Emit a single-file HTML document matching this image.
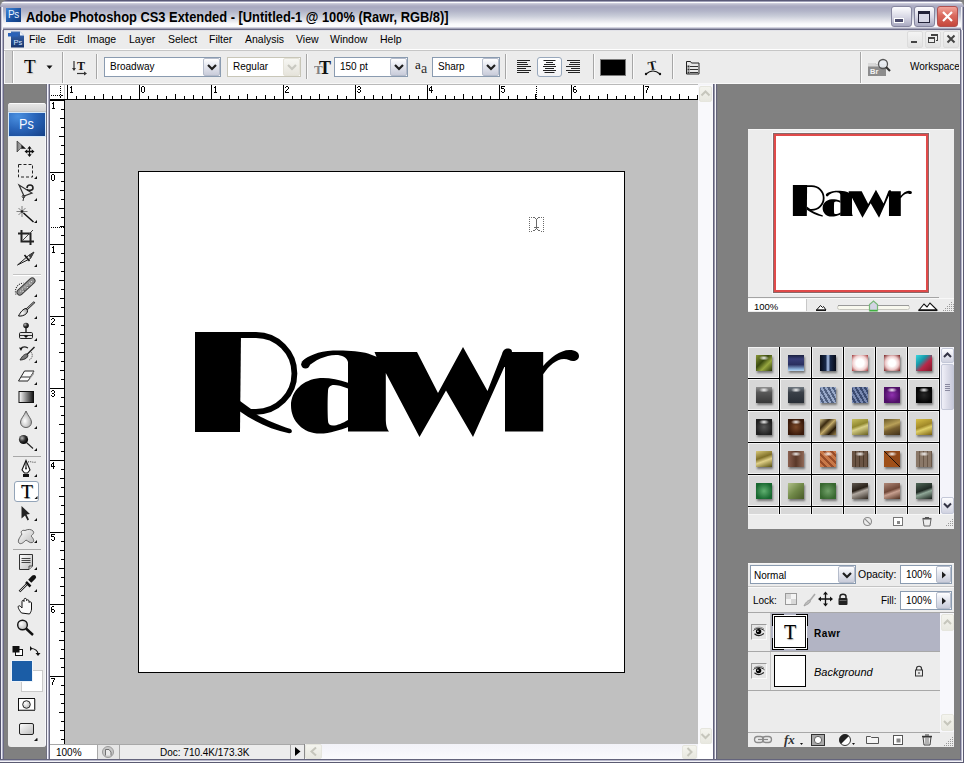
<!DOCTYPE html>
<html><head><meta charset="utf-8"><title>Photoshop CS3</title>
<style>
*{margin:0;padding:0;box-sizing:border-box}
html,body{width:964px;height:763px;overflow:hidden;background:#808080;font-family:"Liberation Sans",sans-serif;font-size:11px;color:#000}
.a{position:absolute}
.t{position:absolute;white-space:nowrap;line-height:1}
#title{left:0;top:0;width:964px;height:30px;border-radius:8px 8px 0 0;
background:linear-gradient(to bottom,#5a5a78 0px,#5a5a78 1px,#a0a0b8 1px,#a0a0b8 2px,#fcfcfe 2px,#fcfcfe 3px,#d4d4e0 3px,#b4b4c8 5px,#a8a8c0 7px,#b2b4c8 11px,#c8ccd8 16px,#e8e8ee 21px,#fafafc 24px,#fcfcfe 27px,#d4d4e0 27px,#d4d4e0 28px,#a4a4b8 28px,#a4a4b8 29px,#6c6c86 29px,#6c6c86 30px)}
.tbtn{top:6px;width:21px;height:21px;border-radius:3px;border:1px solid #8787a0;background:linear-gradient(to bottom,#fdfdff,#d6d6e4 55%,#a9a9c0)}
.tbtn.c{border-color:#b05050;background:linear-gradient(to bottom,#f2a49a,#da6a5e 45%,#c5473c)}
#menubar{left:4px;top:30px;width:956px;height:20px;background:#ececec;border-top:1px solid #e2e2e8;border-bottom:1px solid #ffffff}
#optbar{left:4px;top:50px;width:956px;height:34px;background:#ececec;border-top:1px solid #c6c6c6;border-bottom:1px solid #f8f8f8}
.mi{top:34px;font-size:10.5px}
.mdib{top:31px;width:16px;height:17px;background:linear-gradient(#f4f4f4,#e2e2e2);border:1px solid #dcdcdc;border-radius:2px}
.sep{position:absolute;top:52px;width:2px;height:31px;border-left:1px solid #a6a6a6;border-right:1px solid #fafafa}
.combo{position:absolute;top:57px;height:20px;background:#fff;border:1px solid #8a9bb0}
.cbtn{position:absolute;top:0px;right:0px;width:17px;height:18px;border:1px solid #b5bccb;border-radius:2px;background:linear-gradient(#ffffff 0%,#eceef4 30%,#c9ccda 100%)}
.chev{position:absolute;left:3px;top:5px}
.ctxt{position:absolute;left:5px;top:4px;font-size:10px;white-space:nowrap;line-height:1}
.combo.dis{border-color:#c8c6b8}
.combo.dis .cbtn{border-color:#e4e2d8;background:linear-gradient(#f6f6f2,#e6e4dc)}
.sbtn{position:absolute;border:1px solid #e6e6de;border-radius:2px;background:linear-gradient(#f4f4ee,#e8e8e0)}

</style></head><body>
<div class="a" style="left:0;top:0;width:964px;height:763px;background:#808080"></div>
<!-- frame left -->
<div class="a" style="left:0;top:6px;width:4px;height:757px;background:linear-gradient(to right,#52526c 0,#52526c 1px,#eeeef6 1px,#eeeef6 2px,#b0b0c8 2px,#b0b0c8 3px,#6a6a82 3px)"></div>
<div class="a" style="left:960px;top:6px;width:4px;height:757px;background:linear-gradient(to right,#6a6a82 0,#6a6a82 1px,#b4b4c8 1px,#b4b4c8 2px,#f4f4f8 2px,#f4f4f8 3px,#5a5a72 3px)"></div>
<div class="a" style="left:0;top:759px;width:964px;height:4px;background:linear-gradient(to bottom,#64647c 0,#64647c 1px,#b8b8cc 1px,#b8b8cc 2px,#f4f4f8 2px,#f4f4f8 3px,#5a5a72 3px)"></div>
<div class="a" style="left:962px;top:759px;width:1px;height:3px;background:#f4f4f8"></div><div class="a" style="left:963px;top:759px;width:1px;height:4px;background:#5a5a72"></div><div class="a" style="left:961px;top:759px;width:1px;height:1px;background:#b4b4c8"></div>
<div id="title" class="a"></div>
<div class="a" style="left:0;top:7px;width:3px;height:23px;background:linear-gradient(to right,#5a5a76 0,#5a5a76 1px,#c8c8d6 1px,#c8c8d6 2px,#f4f4f8 2px)"></div>
<div class="a" style="left:961px;top:7px;width:3px;height:23px;background:linear-gradient(to right,#f0f0f4 0,#f0f0f4 1px,#a8a8bc 1px,#a8a8bc 2px,#5a5a76 2px)"></div>
<!-- ps icon -->
<div class="a" style="left:6px;top:8px;width:15px;height:14px;background:linear-gradient(135deg,#3d86d8,#1a4f9e 60%,#123d80);box-shadow:0 0 0 0 #000"></div>
<div class="t" style="left:8px;top:10px;font-size:10px;color:#e8f2ff;letter-spacing:-0.5px">Ps</div>
<div class="t" id="ttxt" style="left:26px;top:10px;font-size:14px;font-weight:bold;color:#000;transform:scaleX(0.92);transform-origin:0 0">Adobe Photoshop CS3 Extended - [Untitled-1 @ 100% (Rawr, RGB/8)]</div>
<div class="a tbtn" style="left:891px"></div>
<div class="a" style="left:895px;top:19px;width:8px;height:3px;background:#4a4a6a;border:1px solid #fff;box-sizing:content-box;margin:-1px"></div>
<div class="a tbtn" style="left:914px"></div>
<div class="a" style="left:918px;top:11px;width:12px;height:12px;border:1px solid #222238;border-top:3px solid #222238;background:#d8d8e6"></div>
<div class="a tbtn c" style="left:937px"></div>
<svg class="a" style="left:937px;top:6px" width="21" height="21"><path d="M6 6 L15 15 M15 6 L6 15" stroke="#fff" stroke-width="2.2"/></svg>
<!-- menubar -->
<div id="menubar" class="a"></div>
<svg class="a" style="left:7px;top:31px" width="18" height="17">
<defs><linearGradient id="mig" x1="0" y1="0" x2="0" y2="1"><stop offset="0" stop-color="#3a6cb8"/><stop offset="1" stop-color="#16346c"/></linearGradient></defs>
<path d="M4 0.5 H13 L17 4.5 V16.5 H4 Z" fill="url(#mig)"/><path d="M13 0.5 L17 4.5 H13 Z" fill="#eef2f8"/><rect x="1" y="2" width="10" height="3.5" fill="#2a62b8"/>
<text x="6.5" y="14" font-size="7.5" fill="#d8e8ff" font-family="Liberation Sans">Ps</text></svg>
<div class="t mi" style="left:29px">File</div>
<div class="t mi" style="left:57px">Edit</div>
<div class="t mi" style="left:87px">Image</div>
<div class="t mi" style="left:129px">Layer</div>
<div class="t mi" style="left:168px">Select</div>
<div class="t mi" style="left:209px">Filter</div>
<div class="t mi" style="left:245px">Analysis</div>
<div class="t mi" style="left:296px">View</div>
<div class="t mi" style="left:330px">Window</div>
<div class="t mi" style="left:380px">Help</div>
<div class="a mdib" style="left:907px"></div>
<div class="a" style="left:911px;top:41px;width:6px;height:2px;background:#444"></div>
<div class="a mdib" style="left:925px"></div>
<svg class="a" style="left:925px;top:31px" width="16" height="17" shape-rendering="crispEdges"><path d="M6 3h6v6h-1.5" fill="none" stroke="#444" stroke-width="1"/><rect x="6" y="3" width="6" height="1.5" fill="#444"/><rect x="3.5" y="6.5" width="6" height="5" fill="#ececec" stroke="#444" stroke-width="1"/><rect x="3" y="6" width="7" height="2" fill="#444"/></svg>
<div class="a mdib" style="left:943px"></div>
<svg class="a" style="left:943px;top:31px" width="16" height="17"><path d="M4.5 4.5 L11.5 11.5 M11.5 4.5 L4.5 11.5" stroke="#444" stroke-width="2"/></svg>
<!-- options bar -->
<div id="optbar" class="a"></div>
<!-- gripper -->
<div class="a" style="left:4px;top:51px;width:10px;height:32px;background:linear-gradient(to right,#f6f6f6 0,#f6f6f6 1px,#d2d2d2 1px,#d2d2d2 8px,#a8a8a8 8px,#a8a8a8 9px,#fff 9px)"></div>
<div class="t" style="left:24px;top:57px;font-family:'Liberation Serif',serif;font-size:19px;text-shadow:1px 1px 1px #bbb">T</div>
<svg class="a" style="left:46px;top:65px" width="8" height="5"><path d="M0.5 0.5h6l-3 3.5z" fill="#111"/></svg>
<div class="sep" style="left:62px"></div>
<svg class="a" style="left:71px;top:59px" width="18" height="17">
<path d="M3 2 V11" stroke="#333" stroke-width="1.2"/><path d="M1 9 L3 12 L5 9" fill="#333"/>
<text x="6" y="11" font-size="12" font-weight="bold" font-family="Liberation Serif" fill="#111">T</text>
<path d="M6 14.5 H15" stroke="#333" stroke-width="1.2"/><path d="M13 12.5 L16 14.5 L13 16.5z" fill="#333"/></svg>
<div class="sep" style="left:96px;top:54px;height:25px"></div>
<div class="combo" style="left:104px;width:117px"><div class="ctxt">Broadway</div><div class="cbtn"><svg class="chev" width="10" height="7"><path d="M1 1 L5 5 L9 1" fill="none" stroke="#1e1e1e" stroke-width="2.2"/></svg></div></div>
<div class="combo dis" style="left:227px;width:74px"><div class="ctxt">Regular</div><div class="cbtn"><svg class="chev" width="10" height="7"><path d="M1 1 L5 5 L9 1" fill="none" stroke="#c8c8c0" stroke-width="2.2"/></svg></div></div>
<div class="sep" style="left:306px;top:54px;height:25px"></div>
<svg class="a" style="left:314px;top:59px" width="19" height="17">
<text x="0" y="15" font-size="13" font-weight="bold" font-family="Liberation Serif" fill="#808080">T</text>
<text x="5" y="15" font-size="18" font-weight="bold" font-family="Liberation Serif" fill="#111">T</text></svg>
<div class="combo" style="left:334px;width:74px"><div class="ctxt">150 pt</div><div class="cbtn"><svg class="chev" width="10" height="7"><path d="M1 1 L5 5 L9 1" fill="none" stroke="#1e1e1e" stroke-width="2.2"/></svg></div></div>
<svg class="a" style="left:414px;top:58px" width="17" height="17">
<text x="1" y="11" font-size="13" font-family="Liberation Serif" fill="#111">a</text>
<text x="7" y="15" font-size="14" font-family="Liberation Serif" fill="#333">a</text></svg>
<div class="combo" style="left:432px;width:68px"><div class="ctxt">Sharp</div><div class="cbtn"><svg class="chev" width="10" height="7"><path d="M1 1 L5 5 L9 1" fill="none" stroke="#1e1e1e" stroke-width="2.2"/></svg></div></div>
<div class="sep" style="left:505px;top:54px;height:25px"></div>
<svg class="a" style="left:517px;top:59px" width="16" height="16"><g stroke="#222" stroke-width="1"><path d="M0 1.5h13M0 3.5h10M0 5.5h11M0 7.5h14M0 9.5h9M0 11.5h14M0 13.5h12"/></g></svg>
<div class="a" style="left:537px;top:57px;width:25px;height:20px;border:1px solid #98a8bc;border-radius:3px;background:linear-gradient(#fff,#f2f2f4)"></div>
<svg class="a" style="left:542px;top:59px" width="16" height="16"><g stroke="#222" stroke-width="1"><path d="M1.5 1.5h12M4 3.5h7M2 5.5h11M1 7.5h13M3 9.5h9M1 11.5h13M2.5 13.5h10"/></g></svg>
<svg class="a" style="left:566px;top:59px" width="16" height="16"><g stroke="#222" stroke-width="1"><path d="M1 1.5h13M4 3.5h10M3 5.5h11M0 7.5h14M5 9.5h9M0 11.5h14M2 13.5h12"/></g></svg>
<div class="sep" style="left:593px;top:54px;height:25px"></div>
<div class="a" style="left:600px;top:59px;width:26px;height:17px;background:#000;border:1px solid #7a7a7a"></div>
<div class="sep" style="left:632px;top:54px;height:25px"></div>
<svg class="a" style="left:644px;top:58px" width="18" height="18">
<text x="4" y="12" font-size="13" font-weight="bold" font-family="Liberation Serif" fill="#111" transform="rotate(-12 8 8)">T</text>
<path d="M2 16 Q9 10 16 16" fill="none" stroke="#111" stroke-width="1.2"/><circle cx="2" cy="16" r="1.2" fill="#111"/><circle cx="16" cy="16" r="1.2" fill="#111"/></svg>
<div class="sep" style="left:672px;top:54px;height:25px"></div>
<svg class="a" style="left:685px;top:59px" width="17" height="17">
<path d="M1.5 2.5h4l1 1.5h7.5v11h-12.5z" fill="#e8e8e8" stroke="#222"/><g stroke="#333"><path d="M5 7.5h8M5 10.5h8M5 13.5h8"/></g><g fill="#333"><rect x="2.5" y="6.5" width="2" height="2"/><rect x="2.5" y="9.5" width="2" height="2"/><rect x="2.5" y="12.5" width="2" height="2"/></g></svg>
<div class="sep" style="left:860px"></div>
<svg class="a" style="left:867px;top:58px" width="26" height="19">
<path d="M1 5h7l1 1.5h10v11.5h-18z" fill="#8c8c8c"/><path d="M1 5h7l1 1.5h10v2h-18z" fill="#d8d8d8"/>
<text x="3" y="16" font-size="7.5" font-weight="bold" font-family="Liberation Sans" fill="#f4f4f4">Br</text>
<circle cx="16" cy="6" r="4.5" fill="#e8eef4" fill-opacity="0.8" stroke="#555" stroke-width="1.3"/><path d="M19 9 L23 13" stroke="#333" stroke-width="2.2"/></svg>
<div class="a" style="left:900px;top:55px;width:59px;height:20px;overflow:hidden"><div class="t" style="left:10px;top:7px;font-size:10px">Workspace</div></div>
<!-- doc window frame -->
<div class="a" style="left:46px;top:84px;width:4px;height:675px;background:linear-gradient(to right,#707080 0,#707080 1px,#f4f4fc 1px,#f4f4fc 2px,#b0b0c8 2px,#b0b0c8 3px,#6a6a80 3px)"></div>
<div class="a" style="left:713px;top:84px;width:5px;height:675px;background:linear-gradient(to right,#60607a 0,#60607a 1px,#9a9aac 1px,#9a9aac 2px,#f4f4f8 2px,#f4f4f8 3px,#64647a 3px,#64647a 4px,#7c7c80 4px)"></div>
<div class="a" style="left:50px;top:84px;width:648px;height:1px;background:#b9b9b9"></div><div class="a" style="left:698px;top:84px;width:15px;height:1px;background:#f4f4f8"></div>
<div class="a" style="left:65px;top:100px;width:633px;height:644px;background:#c0c0c0"></div>
<div class="a" style="left:138px;top:171px;width:487px;height:502px;background:#fff;border:1px solid #000"></div>
<!-- vscroll -->
<div class="a" style="left:698px;top:85px;width:15px;height:659px;background:#f9f9fc"></div>
<div class="sbtn" style="left:699px;top:86px;width:13px;height:16px"></div>
<svg class="a" style="left:699px;top:86px" width="13" height="16"><path d="M2.5 9.5 L6.5 5.5 L10.5 9.5" fill="none" stroke="#c6c6bc" stroke-width="2"/></svg>
<div class="sbtn" style="left:700px;top:728px;width:12px;height:16px"></div>
<svg class="a" style="left:699px;top:728px" width="13" height="16"><path d="M2.5 6 L6.5 10 L10.5 6" fill="none" stroke="#c6c6bc" stroke-width="2"/></svg>
<!-- status bar -->
<div class="a" style="left:50px;top:744px;width:255px;height:1px;background:#a8a8a8"></div>
<div class="a" style="left:50px;top:745px;width:47px;height:14px;background:#fff"></div>
<div class="t" style="left:56px;top:748px;font-size:10px">100%</div>
<div class="a" style="left:97px;top:745px;width:1px;height:14px;background:#a8a8a8"></div>
<div class="a" style="left:98px;top:745px;width:21px;height:14px;background:#e6e6e6"></div>
<svg class="a" style="left:101px;top:745px" width="14" height="14"><circle cx="7" cy="7" r="5.5" fill="#c8c8c8" stroke="#9a9a9a"/><path d="M4.5 10.5 V4.5 H8 L10 7 V10.5" fill="#e8e8e8" stroke="#707070" stroke-width="1"/></svg>
<div class="a" style="left:119px;top:745px;width:1px;height:14px;background:#a8a8a8"></div>
<div class="a" style="left:120px;top:745px;width:170px;height:14px;background:#ececec"></div>
<div class="t" style="left:160px;top:748px;font-size:10px">Doc: 710.4K/173.3K</div>
<div class="a" style="left:290px;top:745px;width:1px;height:14px;background:#a8a8a8"></div>
<div class="a" style="left:291px;top:745px;width:13px;height:14px;background:#ececec"></div>
<svg class="a" style="left:291px;top:745px" width="13" height="14"><path d="M4 2 L9.5 6.5 L4 11z" fill="#000"/></svg>
<div class="a" style="left:304px;top:744px;width:1px;height:15px;background:#8a8a8a"></div>
<div class="a" style="left:305px;top:744px;width:393px;height:15px;background:linear-gradient(#f2f2f8,#fbfbfd)"></div>
<div class="sbtn" style="left:305px;top:744px;width:17px;height:15px"></div>
<svg class="a" style="left:305px;top:744px" width="17" height="15"><path d="M11 3.5 L6.5 7.5 L11 11.5" fill="none" stroke="#c6c6bc" stroke-width="2"/></svg>
<div class="sbtn" style="left:682px;top:745px;width:15px;height:14px"></div>
<svg class="a" style="left:682px;top:745px" width="15" height="14"><path d="M5.5 3 L9.5 7 L5.5 11" fill="none" stroke="#c6c6bc" stroke-width="2"/></svg>
<div class="a" style="left:698px;top:744px;width:15px;height:15px;background:#fff"></div>
<!-- cursor -->
<svg class="a" style="left:0;top:0" width="964" height="763" shape-rendering="crispEdges"><g fill="#6a6a6a"><rect x="529" y="217" width="1" height="1"/><rect x="543" y="217" width="1" height="1"/><rect x="529" y="219" width="1" height="1"/><rect x="543" y="219" width="1" height="1"/><rect x="529" y="221" width="1" height="1"/><rect x="543" y="221" width="1" height="1"/><rect x="529" y="223" width="1" height="1"/><rect x="543" y="223" width="1" height="1"/><rect x="529" y="225" width="1" height="1"/><rect x="543" y="225" width="1" height="1"/><rect x="529" y="227" width="1" height="1"/><rect x="543" y="227" width="1" height="1"/><rect x="529" y="229" width="1" height="1"/><rect x="543" y="229" width="1" height="1"/><rect x="529" y="231" width="1" height="1"/><rect x="543" y="231" width="1" height="1"/><rect x="531" y="217" width="1" height="1"/><rect x="531" y="231" width="1" height="1"/><rect x="541" y="217" width="1" height="1"/><rect x="541" y="231" width="1" height="1"/><rect x="536" y="219" width="1" height="10"/><rect x="534" y="227" width="5" height="1"/><rect x="533" y="217" width="2" height="1"/><rect x="535" y="218" width="1" height="1"/><rect x="538" y="217" width="2" height="1"/><rect x="537" y="218" width="1" height="1"/><rect x="535" y="229" width="1" height="1"/><rect x="537" y="229" width="1" height="1"/><rect x="533" y="230" width="2" height="1"/><rect x="538" y="230" width="2" height="1"/></g></svg>
<!-- rulers -->
<svg class="a" style="left:50px;top:84px" width="648" height="16" shape-rendering="crispEdges"><rect x="0" y="0" width="648" height="1" fill="#b9b9b9"/><rect x="0" y="1" width="648" height="14" fill="#fff"/><rect x="0" y="15" width="648" height="1" fill="#000"/><rect x="14" y="1" width="1" height="14" fill="#c8c8c8"/><g fill="#000"><rect x="17" y="1" width="1" height="14"/><rect x="26" y="12" width="1" height="3"/><rect x="35" y="11" width="1" height="4"/><rect x="44" y="12" width="1" height="3"/><rect x="53" y="10" width="1" height="5"/><rect x="62" y="12" width="1" height="3"/><rect x="71" y="11" width="1" height="4"/><rect x="80" y="12" width="1" height="3"/><rect x="21" y="2" width="1" height="1"/><rect x="20" y="3" width="2" height="1"/><rect x="21" y="4" width="1" height="1"/><rect x="21" y="5" width="1" height="1"/><rect x="21" y="6" width="1" height="1"/><rect x="21" y="7" width="1" height="1"/><rect x="20" y="8" width="3" height="1"/><rect x="89" y="1" width="1" height="14"/><rect x="98" y="12" width="1" height="3"/><rect x="107" y="11" width="1" height="4"/><rect x="116" y="12" width="1" height="3"/><rect x="125" y="10" width="1" height="5"/><rect x="134" y="12" width="1" height="3"/><rect x="143" y="11" width="1" height="4"/><rect x="152" y="12" width="1" height="3"/><rect x="92" y="2" width="2" height="1"/><rect x="91" y="3" width="1" height="1"/><rect x="94" y="3" width="1" height="1"/><rect x="91" y="4" width="1" height="1"/><rect x="94" y="4" width="1" height="1"/><rect x="91" y="5" width="1" height="1"/><rect x="94" y="5" width="1" height="1"/><rect x="91" y="6" width="1" height="1"/><rect x="94" y="6" width="1" height="1"/><rect x="91" y="7" width="1" height="1"/><rect x="94" y="7" width="1" height="1"/><rect x="92" y="8" width="2" height="1"/><rect x="161" y="1" width="1" height="14"/><rect x="170" y="12" width="1" height="3"/><rect x="179" y="11" width="1" height="4"/><rect x="188" y="12" width="1" height="3"/><rect x="197" y="10" width="1" height="5"/><rect x="206" y="12" width="1" height="3"/><rect x="215" y="11" width="1" height="4"/><rect x="224" y="12" width="1" height="3"/><rect x="165" y="2" width="1" height="1"/><rect x="164" y="3" width="2" height="1"/><rect x="165" y="4" width="1" height="1"/><rect x="165" y="5" width="1" height="1"/><rect x="165" y="6" width="1" height="1"/><rect x="165" y="7" width="1" height="1"/><rect x="164" y="8" width="3" height="1"/><rect x="233" y="1" width="1" height="14"/><rect x="242" y="12" width="1" height="3"/><rect x="251" y="11" width="1" height="4"/><rect x="260" y="12" width="1" height="3"/><rect x="269" y="10" width="1" height="5"/><rect x="278" y="12" width="1" height="3"/><rect x="287" y="11" width="1" height="4"/><rect x="296" y="12" width="1" height="3"/><rect x="236" y="2" width="2" height="1"/><rect x="235" y="3" width="1" height="1"/><rect x="238" y="3" width="1" height="1"/><rect x="238" y="4" width="1" height="1"/><rect x="237" y="5" width="1" height="1"/><rect x="236" y="6" width="1" height="1"/><rect x="235" y="7" width="1" height="1"/><rect x="235" y="8" width="4" height="1"/><rect x="305" y="1" width="1" height="14"/><rect x="314" y="12" width="1" height="3"/><rect x="323" y="11" width="1" height="4"/><rect x="332" y="12" width="1" height="3"/><rect x="341" y="10" width="1" height="5"/><rect x="350" y="12" width="1" height="3"/><rect x="359" y="11" width="1" height="4"/><rect x="368" y="12" width="1" height="3"/><rect x="308" y="2" width="2" height="1"/><rect x="307" y="3" width="1" height="1"/><rect x="310" y="3" width="1" height="1"/><rect x="310" y="4" width="1" height="1"/><rect x="308" y="5" width="2" height="1"/><rect x="310" y="6" width="1" height="1"/><rect x="307" y="7" width="1" height="1"/><rect x="310" y="7" width="1" height="1"/><rect x="308" y="8" width="2" height="1"/><rect x="377" y="1" width="1" height="14"/><rect x="386" y="12" width="1" height="3"/><rect x="395" y="11" width="1" height="4"/><rect x="404" y="12" width="1" height="3"/><rect x="413" y="10" width="1" height="5"/><rect x="422" y="12" width="1" height="3"/><rect x="431" y="11" width="1" height="4"/><rect x="440" y="12" width="1" height="3"/><rect x="381" y="2" width="1" height="1"/><rect x="380" y="3" width="2" height="1"/><rect x="379" y="4" width="1" height="1"/><rect x="381" y="4" width="1" height="1"/><rect x="379" y="5" width="1" height="1"/><rect x="381" y="5" width="1" height="1"/><rect x="379" y="6" width="4" height="1"/><rect x="381" y="7" width="1" height="1"/><rect x="381" y="8" width="1" height="1"/><rect x="449" y="1" width="1" height="14"/><rect x="458" y="12" width="1" height="3"/><rect x="467" y="11" width="1" height="4"/><rect x="476" y="12" width="1" height="3"/><rect x="485" y="10" width="1" height="5"/><rect x="494" y="12" width="1" height="3"/><rect x="503" y="11" width="1" height="4"/><rect x="512" y="12" width="1" height="3"/><rect x="451" y="2" width="4" height="1"/><rect x="451" y="3" width="1" height="1"/><rect x="451" y="4" width="3" height="1"/><rect x="454" y="5" width="1" height="1"/><rect x="454" y="6" width="1" height="1"/><rect x="451" y="7" width="1" height="1"/><rect x="454" y="7" width="1" height="1"/><rect x="452" y="8" width="2" height="1"/><rect x="521" y="1" width="1" height="14"/><rect x="530" y="12" width="1" height="3"/><rect x="539" y="11" width="1" height="4"/><rect x="548" y="12" width="1" height="3"/><rect x="557" y="10" width="1" height="5"/><rect x="566" y="12" width="1" height="3"/><rect x="575" y="11" width="1" height="4"/><rect x="584" y="12" width="1" height="3"/><rect x="524" y="2" width="2" height="1"/><rect x="523" y="3" width="1" height="1"/><rect x="523" y="4" width="1" height="1"/><rect x="523" y="5" width="3" height="1"/><rect x="523" y="6" width="1" height="1"/><rect x="526" y="6" width="1" height="1"/><rect x="523" y="7" width="1" height="1"/><rect x="526" y="7" width="1" height="1"/><rect x="524" y="8" width="2" height="1"/><rect x="593" y="1" width="1" height="14"/><rect x="602" y="12" width="1" height="3"/><rect x="611" y="11" width="1" height="4"/><rect x="620" y="12" width="1" height="3"/><rect x="629" y="10" width="1" height="5"/><rect x="638" y="12" width="1" height="3"/><rect x="647" y="11" width="1" height="4"/><rect x="595" y="2" width="4" height="1"/><rect x="598" y="3" width="1" height="1"/><rect x="597" y="4" width="1" height="1"/><rect x="597" y="5" width="1" height="1"/><rect x="596" y="6" width="1" height="1"/><rect x="596" y="7" width="1" height="1"/><rect x="596" y="8" width="1" height="1"/></g></svg>
<svg class="a" style="left:50px;top:100px" width="15" height="644" shape-rendering="crispEdges"><rect x="0" y="0" width="14" height="644" fill="#fff"/><rect x="14" y="0" width="1" height="644" fill="#000"/><g fill="#000"><rect x="0" y="0" width="14" height="1"/><rect x="11" y="9" width="3" height="1"/><rect x="10" y="18" width="4" height="1"/><rect x="11" y="27" width="3" height="1"/><rect x="9" y="36" width="5" height="1"/><rect x="11" y="45" width="3" height="1"/><rect x="10" y="54" width="4" height="1"/><rect x="11" y="63" width="3" height="1"/><rect x="3" y="2" width="1" height="1"/><rect x="2" y="3" width="2" height="1"/><rect x="3" y="4" width="1" height="1"/><rect x="3" y="5" width="1" height="1"/><rect x="3" y="6" width="1" height="1"/><rect x="3" y="7" width="1" height="1"/><rect x="2" y="8" width="3" height="1"/><rect x="0" y="72" width="14" height="1"/><rect x="11" y="81" width="3" height="1"/><rect x="10" y="90" width="4" height="1"/><rect x="11" y="99" width="3" height="1"/><rect x="9" y="108" width="5" height="1"/><rect x="11" y="117" width="3" height="1"/><rect x="10" y="126" width="4" height="1"/><rect x="11" y="135" width="3" height="1"/><rect x="2" y="74" width="2" height="1"/><rect x="1" y="75" width="1" height="1"/><rect x="4" y="75" width="1" height="1"/><rect x="1" y="76" width="1" height="1"/><rect x="4" y="76" width="1" height="1"/><rect x="1" y="77" width="1" height="1"/><rect x="4" y="77" width="1" height="1"/><rect x="1" y="78" width="1" height="1"/><rect x="4" y="78" width="1" height="1"/><rect x="1" y="79" width="1" height="1"/><rect x="4" y="79" width="1" height="1"/><rect x="2" y="80" width="2" height="1"/><rect x="0" y="144" width="14" height="1"/><rect x="11" y="153" width="3" height="1"/><rect x="10" y="162" width="4" height="1"/><rect x="11" y="171" width="3" height="1"/><rect x="9" y="180" width="5" height="1"/><rect x="11" y="189" width="3" height="1"/><rect x="10" y="198" width="4" height="1"/><rect x="11" y="207" width="3" height="1"/><rect x="3" y="146" width="1" height="1"/><rect x="2" y="147" width="2" height="1"/><rect x="3" y="148" width="1" height="1"/><rect x="3" y="149" width="1" height="1"/><rect x="3" y="150" width="1" height="1"/><rect x="3" y="151" width="1" height="1"/><rect x="2" y="152" width="3" height="1"/><rect x="0" y="216" width="14" height="1"/><rect x="11" y="225" width="3" height="1"/><rect x="10" y="234" width="4" height="1"/><rect x="11" y="243" width="3" height="1"/><rect x="9" y="252" width="5" height="1"/><rect x="11" y="261" width="3" height="1"/><rect x="10" y="270" width="4" height="1"/><rect x="11" y="279" width="3" height="1"/><rect x="2" y="218" width="2" height="1"/><rect x="1" y="219" width="1" height="1"/><rect x="4" y="219" width="1" height="1"/><rect x="4" y="220" width="1" height="1"/><rect x="3" y="221" width="1" height="1"/><rect x="2" y="222" width="1" height="1"/><rect x="1" y="223" width="1" height="1"/><rect x="1" y="224" width="4" height="1"/><rect x="0" y="288" width="14" height="1"/><rect x="11" y="297" width="3" height="1"/><rect x="10" y="306" width="4" height="1"/><rect x="11" y="315" width="3" height="1"/><rect x="9" y="324" width="5" height="1"/><rect x="11" y="333" width="3" height="1"/><rect x="10" y="342" width="4" height="1"/><rect x="11" y="351" width="3" height="1"/><rect x="2" y="290" width="2" height="1"/><rect x="1" y="291" width="1" height="1"/><rect x="4" y="291" width="1" height="1"/><rect x="4" y="292" width="1" height="1"/><rect x="2" y="293" width="2" height="1"/><rect x="4" y="294" width="1" height="1"/><rect x="1" y="295" width="1" height="1"/><rect x="4" y="295" width="1" height="1"/><rect x="2" y="296" width="2" height="1"/><rect x="0" y="360" width="14" height="1"/><rect x="11" y="369" width="3" height="1"/><rect x="10" y="378" width="4" height="1"/><rect x="11" y="387" width="3" height="1"/><rect x="9" y="396" width="5" height="1"/><rect x="11" y="405" width="3" height="1"/><rect x="10" y="414" width="4" height="1"/><rect x="11" y="423" width="3" height="1"/><rect x="3" y="362" width="1" height="1"/><rect x="2" y="363" width="2" height="1"/><rect x="1" y="364" width="1" height="1"/><rect x="3" y="364" width="1" height="1"/><rect x="1" y="365" width="1" height="1"/><rect x="3" y="365" width="1" height="1"/><rect x="1" y="366" width="4" height="1"/><rect x="3" y="367" width="1" height="1"/><rect x="3" y="368" width="1" height="1"/><rect x="0" y="432" width="14" height="1"/><rect x="11" y="441" width="3" height="1"/><rect x="10" y="450" width="4" height="1"/><rect x="11" y="459" width="3" height="1"/><rect x="9" y="468" width="5" height="1"/><rect x="11" y="477" width="3" height="1"/><rect x="10" y="486" width="4" height="1"/><rect x="11" y="495" width="3" height="1"/><rect x="1" y="434" width="4" height="1"/><rect x="1" y="435" width="1" height="1"/><rect x="1" y="436" width="3" height="1"/><rect x="4" y="437" width="1" height="1"/><rect x="4" y="438" width="1" height="1"/><rect x="1" y="439" width="1" height="1"/><rect x="4" y="439" width="1" height="1"/><rect x="2" y="440" width="2" height="1"/><rect x="0" y="504" width="14" height="1"/><rect x="11" y="513" width="3" height="1"/><rect x="10" y="522" width="4" height="1"/><rect x="11" y="531" width="3" height="1"/><rect x="9" y="540" width="5" height="1"/><rect x="11" y="549" width="3" height="1"/><rect x="10" y="558" width="4" height="1"/><rect x="11" y="567" width="3" height="1"/><rect x="2" y="506" width="2" height="1"/><rect x="1" y="507" width="1" height="1"/><rect x="1" y="508" width="1" height="1"/><rect x="1" y="509" width="3" height="1"/><rect x="1" y="510" width="1" height="1"/><rect x="4" y="510" width="1" height="1"/><rect x="1" y="511" width="1" height="1"/><rect x="4" y="511" width="1" height="1"/><rect x="2" y="512" width="2" height="1"/><rect x="0" y="576" width="14" height="1"/><rect x="11" y="585" width="3" height="1"/><rect x="10" y="594" width="4" height="1"/><rect x="11" y="603" width="3" height="1"/><rect x="9" y="612" width="5" height="1"/><rect x="11" y="621" width="3" height="1"/><rect x="10" y="630" width="4" height="1"/><rect x="11" y="639" width="3" height="1"/><rect x="1" y="578" width="4" height="1"/><rect x="4" y="579" width="1" height="1"/><rect x="3" y="580" width="1" height="1"/><rect x="3" y="581" width="1" height="1"/><rect x="2" y="582" width="1" height="1"/><rect x="2" y="583" width="1" height="1"/><rect x="2" y="584" width="1" height="1"/></g></svg>
<svg class="a" style="left:50px;top:85px" width="15" height="14" shape-rendering="crispEdges"><g fill="#000">
<rect x="10" y="1" width="1" height="1"/><rect x="10" y="3" width="1" height="1"/><rect x="10" y="5" width="1" height="1"/><rect x="10" y="7" width="1" height="1"/><rect x="10" y="12" width="1" height="1"/>
<rect x="1" y="10" width="1" height="1"/><rect x="3" y="10" width="1" height="1"/><rect x="5" y="10" width="1" height="1"/><rect x="7" y="10" width="1" height="1"/><rect x="12" y="10" width="1" height="1"/>
<rect x="9" y="10" width="1" height="1"/><rect x="11" y="10" width="1" height="1"/><rect x="10" y="9" width="1" height="1"/><rect x="10" y="11" width="1" height="1"/></g></svg>
<svg class="a" style="left:536px;top:85px" width="1" height="14" shape-rendering="crispEdges"><g fill="#000"><rect y="1" width="1" height="1"/><rect y="3" width="1" height="1"/><rect y="5" width="1" height="1"/><rect y="7" width="1" height="1"/><rect y="9" width="1" height="1"/><rect y="11" width="1" height="1"/><rect y="13" width="1" height="1"/></g></svg>
<svg class="a" style="left:50px;top:227px" width="14" height="1" shape-rendering="crispEdges"><g fill="#000"><rect x="1" width="1" height="1"/><rect x="3" width="1" height="1"/><rect x="5" width="1" height="1"/><rect x="7" width="1" height="1"/><rect x="9" width="1" height="1"/><rect x="11" width="1" height="1"/><rect x="13" width="1" height="1"/></g></svg>
<!-- Rawr -->
<svg class="a" style="left:0;top:0" width="964" height="763">
<g id="rawrg"><g fill="#000">
<path d="M195 332 H241 L240 432 H195 Z"/>
<path d="M240 335 H256 A 38.4 38.4 0 0 1 256 411.8 H 250" fill="none" stroke="#000" stroke-width="5.8"/>
<path d="M240 401 L251 409 L257 414.8 C 266 420, 278 425, 290.5 429 C 292.5 430, 292.5 433.5, 289 433.2 C 272 430, 255 422, 240 411.5 Z"/>
<path d="M348 382.8 C 338 379, 328 377.5, 320 378 C 303 379.5, 291 391, 291 405.5 C 291 421, 303 433.6, 320 433.6 C 330 433.6, 340 430, 349 426.8 Z"/>
<circle cx="305.5" cy="364.2" r="4.3"/>
<path d="M302.5 361 C 308 356, 318 351.5, 333 350.6 C 345 350.2, 360 351, 368 353.5 L 376.5 356.8 L 374.5 352 H 417 L 438 393 L 463 347 L 487.5 391 L 502 354 C 503 350, 505 348.5, 508 348.5 C 511 348.5, 512 350, 512 352 H 543.2 V 366 C 550 358, 560 350, 569.5 350 C 575.5 350, 579 352.5, 579 356 C 579 359.5, 576 361, 573 361 C 570 361, 568 359, 564 359 C 556 359, 549 366, 543.2 374.2 V 431.5 H 505 V 367 L 504.3 367 L 473 437 L 446 390.5 L 419.5 437 L 385.8 373 V 420 C 386 426, 387 429, 389 431.5 H 348 V 362 C 347 357.5, 342 355, 335.8 355 C 325 355.5, 315 360, 307 367.4 Z"/>
</g>
<path d="M348 388.6 C 342 386, 337 385, 334 385 C 330 385, 328 387.5, 328 391 C 327.5 398, 327.5 412, 328 421 C 328 424, 330 425.6, 333 425.6 C 337 425.6, 343 423, 348 420 Z" fill="#fff"/></g>
</svg>
<!-- toolbox -->
<div class="a" style="left:8px;top:103px;width:38px;height:644px;background:#ececec;border-radius:3px 3px 3px 3px;border-right:1px solid #f8f8fc"></div>
<div class="a" style="left:8px;top:103px;width:38px;height:9px;border-radius:3px 3px 0 0;background:linear-gradient(#fafafa 0,#fafafa 1px,#e6e6e6 1px,#d4d4d4 8px,#c4c4c4 8px)"></div>
<div class="a" style="left:8px;top:112px;width:38px;height:25px;border:1px solid #d4e8fa;background:radial-gradient(ellipse at 25% 15%,#4a90e0 0%,#2a66bb 45%,#143f86 100%)"></div>
<div class="t" style="left:19px;top:116px;font-size:15px;color:#f4f8ff;transform:scaleX(0.85);transform-origin:0 0">Ps</div>
<svg class="a" style="left:0;top:0" width="50" height="763">
<defs>
<linearGradient id="gg" x1="0" x2="1"><stop offset="0" stop-color="#fff"/><stop offset="1" stop-color="#111"/></linearGradient>
<radialGradient id="ball" cx="0.35" cy="0.35" r="0.7"><stop offset="0" stop-color="#bbb"/><stop offset="0.5" stop-color="#333"/><stop offset="1" stop-color="#000"/></radialGradient>
<radialGradient id="drop" cx="0.4" cy="0.6" r="0.6"><stop offset="0" stop-color="#fff"/><stop offset="1" stop-color="#aaa"/></radialGradient>
</defs>
<g fill="#111">
<!-- corner triangles -->
<path d="M34 179h3v-3z M34 201h3v-3z M34 223h3v-3z M34 267h3v-3z M34 297h3v-3z M34 319h3v-3z M34 341h3v-3z M34 363h3v-3z M34 385h3v-3z M34 407h3v-3z M34 429h3v-3z M34 451h3v-3z M34 477h3v-3z M35 499h3v-3z M34 521h3v-3z M34 543h3v-3z M34 570h3v-3z M34 592h3v-3z M34 741h3v-3z"/>
</g>
<!-- move -->
<defs><linearGradient id="mvg" x1="0" x2="1"><stop offset="0" stop-color="#777"/><stop offset="0.4" stop-color="#aaa"/><stop offset="0.6" stop-color="#111"/></linearGradient></defs><path d="M17 141 L25.5 148.5 H20.5 L17 152 Z" fill="url(#mvg)" stroke="#222" stroke-width="0.6"/>
<path d="M29.5 146 L34.5 151.5 L29.5 157 L24.5 151.5Z" fill="#fafafa"/><path d="M29.5 147.5 V155.5 M26 151.5 H33" stroke="#111" stroke-width="1.3"/><path d="M29.5 146 L27.3 148.8 H31.7Z M29.5 157 L27.3 154.2 H31.7Z M24.5 151.5 L27.3 149.3 V153.7Z M34.5 151.5 L31.7 149.3 V153.7Z" fill="#111"/>
<!-- marquee -->
<rect x="18.5" y="164.5" width="14" height="12.5" fill="none" stroke="#222" stroke-dasharray="3 2"/>
<!-- lasso -->
<path d="M19 185 L32 193 L24 196 Z" fill="none" stroke="#333" stroke-width="1.2"/>
<path d="M27 188 C 27 184, 33 184, 33 188 C 33 191, 28 191, 27 189" fill="none" stroke="#222" stroke-width="1.6"/>
<path d="M24 196 L23 201" stroke="#333"/><circle cx="23.5" cy="196.5" r="1.3" fill="none" stroke="#333"/>
<!-- wand -->
<path d="M22 206 V217 M16.5 211.5 H27.5 M18.5 208 L25.5 215 M25.5 208 L18.5 215" stroke="#555" stroke-width="0.7"/><circle cx="22" cy="211.5" r="1.3" fill="#222"/>
<path d="M23.5 213 L33.5 222" stroke="#111" stroke-width="1.5"/>
<!-- crop -->
<path d="M21.5 230 V241.5 H34 M18 233.5 H30.5 V245" fill="none" stroke="#222" stroke-width="2"/>
<path d="M22.5 240.5 L33 230" stroke="#444" stroke-width="1"/>
<!-- slice -->
<path d="M17.5 265 L28.5 255.5 L34 252 L30.5 258.5 Z" fill="#e0e0e0" stroke="#222" stroke-width="1"/><path d="M28.5 255.5 L34 252 L30.5 258.5Z" fill="#444"/>
<path d="M24.5 255 L29.5 261" stroke="#111" stroke-width="1.6"/>
<!-- separator -->
<rect x="13" y="274" width="28" height="1" fill="#c4c4c4"/><rect x="13" y="275" width="28" height="1" fill="#fff"/>
<!-- healing -->
<path d="M19.8 292.2 L32.2 280.8" stroke="#3a3a3a" stroke-width="6.6" stroke-linecap="round"/>
<path d="M19.8 292.2 L32.2 280.8" stroke="#909090" stroke-width="4.8" stroke-linecap="round"/>
<path d="M23.5 289.5 L25 291 M27.5 286 L29 287.5" stroke="#555" stroke-width="0.8"/>
<g fill="#e8e8e8"><circle cx="20.5" cy="291" r="0.6"/><circle cx="22.5" cy="289" r="0.6"/><circle cx="25" cy="287" r="0.6"/><circle cx="27" cy="285" r="0.6"/><circle cx="29.5" cy="283" r="0.6"/><circle cx="31.5" cy="281.5" r="0.6"/><circle cx="23" cy="291.5" r="0.6"/><circle cx="27.5" cy="287.5" r="0.6"/><circle cx="31" cy="284" r="0.6"/></g>
<path d="M16 294.5 A 8.5 8.5 0 0 1 23.5 283" fill="none" stroke="#222" stroke-width="1.1" stroke-dasharray="1 1.2"/>
<!-- brush -->
<path d="M26.5 309.5 L34.5 302" stroke="#222" stroke-width="2.2"/><path d="M27 309 L34 302.5" stroke="#f4f4f4" stroke-width="0.7"/>
<path d="M18.5 316 C 20.5 312, 23.5 308.5, 26 308.5 C 28 309.5, 28 311.5, 26.5 313.5 C 24.5 315.5, 21 316.5, 18.5 316Z" fill="url(#drop)" stroke="#111" stroke-width="1"/>
<!-- stamp -->
<circle cx="26" cy="325.5" r="2.8" fill="url(#ball)"/><path d="M26 328 V332" stroke="#222" stroke-width="1.4"/>
<rect x="19.5" y="332.5" width="13" height="6" rx="1.2" fill="#e4e4e4" stroke="#222"/><path d="M20 335.5 H32" stroke="#333"/><path d="M23.5 335.5 L26 338 L28.5 335.5Z" fill="#111"/>
<!-- history brush -->
<path d="M20 360 C 22 356, 25 353.5, 27 354 C 28.5 355, 28 356.5, 26.5 358 C 24.5 359.5, 22 360, 20 360Z" fill="#777" stroke="#222" stroke-width="0.9"/>
<path d="M27 354.5 L34.5 347" stroke="#222" stroke-width="1.5"/>
<path d="M28 348 C 25 346.5, 22 347, 20.5 349" fill="none" stroke="#222" stroke-width="1.2"/><path d="M19 347.5 L21 351 L22.5 348Z" fill="#111"/>
<path d="M31 352 A 5 5 0 0 1 29 360" fill="none" stroke="#333" stroke-dasharray="1 1"/>
<!-- eraser -->
<path d="M18.5 381 L24.5 371 H34 L28 381 Z" fill="#fafafa" stroke="#222" stroke-width="1"/>
<path d="M21 377 H30.5" stroke="#333"/><path d="M28 381 L34 371 V374 L28.5 381" fill="#999"/>
<!-- gradient -->
<rect x="19" y="391.5" width="14.5" height="11" fill="url(#gg)" stroke="#111" stroke-width="1"/>
<!-- drop -->
<path d="M26 411 C 24 416, 20.5 419, 20.5 422 C 20.5 425.5, 23 427.5, 26 427.5 C 29 427.5, 31.5 425.5, 31.5 422 C 31.5 419, 28 416, 26 411Z" fill="url(#drop)" stroke="#555" stroke-width="0.9"/>
<!-- dodge -->
<circle cx="23.5" cy="439.5" r="4.6" fill="url(#ball)"/><path d="M26.5 442.5 L33 448.5" stroke="#222" stroke-width="1.1"/>
<!-- separator -->
<rect x="13" y="456" width="28" height="1" fill="#a8a8a8"/>
<!-- pen -->
<path d="M26 460.5 L30 470 L27.5 473 H24.5 L22 470 Z" fill="#fff" stroke="#111" stroke-width="1.1"/><path d="M26 461 V468" stroke="#111"/><circle cx="26" cy="468.5" r="0.9" fill="#111"/>
<rect x="23" y="474" width="6" height="3" fill="#111"/>
<path d="M28 462 C 31 461, 33 463, 36 462" fill="none" stroke="#333" stroke-dasharray="1 1.2"/>
</g>
</svg>
<div class="a" style="left:14px;top:481px;width:25px;height:21px;border:1px solid #93a4b8;border-radius:3px;background:#fff"></div>
<div class="t" style="left:21px;top:482px;font-family:'Liberation Serif',serif;font-size:19.5px;text-shadow:0.5px 0.5px 0.5px #999">T</div>
<svg class="a" style="left:0;top:0" width="50" height="763">
<defs><linearGradient id="ndg" x1="0" y1="0" x2="1" y2="1"><stop offset="0" stop-color="#fff"/><stop offset="1" stop-color="#bbb"/></linearGradient>
<radialGradient id="zg" cx="0.35" cy="0.35" r="0.7"><stop offset="0" stop-color="#fff"/><stop offset="1" stop-color="#b8b8b8"/></radialGradient></defs>
<path d="M34.5 499h3v-3z" fill="#111"/>
<!-- path select -->
<path d="M21.5 506 L30 514 L26.5 514.5 L29 519.5 L27.5 520.5 L25 515.5 L21.5 518.5 Z" fill="#222"/>
<!-- custom shape -->
<path d="M19 543 C 17 541, 20 537, 22 534 C 20 532, 22 529.5, 25 530.5 C 28 529, 31 529, 33 531 C 35 533, 32 535, 31 536 C 33 538, 35 541, 32.5 542.5 C 30 543.5, 28 541, 26 540 C 24 542, 21 545, 19 543Z" fill="url(#ndg)" stroke="#555" stroke-width="0.9"/>
<!-- separator -->
<rect x="13" y="549" width="28" height="1" fill="#a8a8a8"/>
<!-- notes -->
<path d="M19.5 554.5 H32.5 V566 L29 569.5 H19.5 Z" fill="url(#ndg)" stroke="#333" stroke-width="1"/>
<path d="M21.5 558.5 H30.5 M21.5 560.5 H30.5 M21.5 562.5 H30.5" stroke="#333" stroke-width="0.9"/>
<path d="M32.5 566 L29 566 L29 569.5" fill="#ccc" stroke="#333" stroke-width="0.8"/>
<!-- eyedropper -->
<path d="M19.5 591.5 L27.5 583.5" stroke="#222" stroke-width="2.4"/><path d="M20 591 L27 584" stroke="#eee" stroke-width="0.8"/>
<path d="M26 582 L30.5 586.5" stroke="#111" stroke-width="2.5"/><path d="M29 580.5 L33 576.5 C 34.5 575.5, 35.5 577, 34.5 578 L30.5 582" stroke="#111" stroke-width="2.4" fill="none"/>
<!-- hand -->
<path d="M21.5 613 C 19 610, 17.5 607, 18.5 606 C 19.5 605, 21 607, 22 608 V601.5 C 22 600, 24 600, 24 601.5 V599.5 C 24 598, 26.5 598, 26.5 599.5 V600.5 C 26.5 599.5, 29 599.5, 29 601 V602.5 C 29 601.5, 31.5 601.5, 31.5 603 V609 C 31.5 611, 30.5 612.5, 29.5 614 Z" fill="#fafafa" stroke="#111" stroke-width="1"/>
<!-- zoom -->
<circle cx="22.5" cy="625" r="4.8" fill="url(#zg)" stroke="#111" stroke-width="1.4"/><path d="M26 628.5 L33 635" stroke="#111" stroke-width="2.4"/>
<!-- default colors -->
<rect x="15.5" y="649.5" width="7" height="6" fill="#fff" stroke="#111"/><rect x="12.5" y="646" width="7" height="6.5" fill="#111"/>
<!-- swap -->
<path d="M31 648.5 C 35 648.5, 38 651, 38 654" fill="none" stroke="#111" stroke-width="1.2"/><path d="M30 646 L30 651 L32.5 648.5Z M35.5 653 H40.5 L38 656Z" fill="#111"/>
<!-- fg/bg -->
<rect x="21.5" y="670.5" width="21" height="21" fill="#fff" stroke="#cacaca"/>
<rect x="11" y="660" width="22" height="22" fill="#eef4fa"/><rect x="12" y="661" width="20" height="20" fill="#1b5da6"/>
<!-- quick mask -->
<rect x="18.5" y="698.5" width="16" height="12" fill="#fff" stroke="#111"/><path d="M19 710 H35 V699" fill="none" stroke="#777" stroke-width="1"/><circle cx="26.5" cy="704.5" r="3.8" fill="url(#zg)" stroke="#111" stroke-width="0.9"/>
<!-- screen mode -->
<rect x="19.5" y="723.5" width="14" height="11" rx="1.5" fill="url(#ndg)" stroke="#222"/>
<path d="M34.5 741h3v-3z" fill="#111"/>
</svg>
<!-- navigator -->
<div class="a" style="left:748px;top:129px;width:206px;height:183px;background:#ececec;border-top:1px solid #f6f6f6"></div>
<div class="a" style="left:772px;top:132px;width:158px;height:162px;background:#f6f8fa"></div>
<div class="a" style="left:773px;top:133px;width:156px;height:160px;background:#fff;border:1px solid #8a6868"></div>
<div class="a" style="left:774px;top:134px;width:154px;height:158px;border:2px solid #e04a4a"></div>
<svg class="a" style="left:0;top:0" width="964" height="763"><use href="#rawrg" transform="translate(775.5 135.5) scale(0.31) translate(-139 -172)"/></svg>
<div class="a" style="left:748px;top:297px;width:191px;height:1px;background:#a4a4a4"></div>
<div class="a" style="left:748px;top:298px;width:206px;height:1px;background:#f8f8f8"></div>
<div class="a" style="left:748px;top:299px;width:59px;height:12px;background:#fff;border-right:1px solid #c8c8c8"></div>
<div class="t" style="left:754px;top:302px;font-size:9.5px">100%</div>
<svg class="a" style="left:810px;top:299px" width="144" height="13">
<path d="M6.5 11 L10.5 6.5 L12.5 8.5 L13.5 7.5 L16 11 Z" fill="#fff" stroke="#111" stroke-width="1"/><path d="M6 11.3 H16" stroke="#111" stroke-width="1.3"/>
<rect x="27.5" y="6.5" width="72" height="4" rx="2" fill="#f8f8ee" stroke="#c8c8c0" stroke-width="1"/><path d="M28 6.5 H99" stroke="#9a9a9a"/>
<path d="M59.5 12 V5.5 L63.5 2 L67.5 5.5 V12 Z" fill="#d4d4e4" stroke="#78b878" stroke-width="1.2"/><path d="M59.8 11.5 H67.2" stroke="#40b040" stroke-width="1.5"/>
<path d="M109 11 L114 5 L117 8 L120 4 L127 11 Z" fill="#fff" stroke="#111" stroke-width="1.1"/><path d="M108.5 11.3 H127" stroke="#111" stroke-width="1.6"/>
<g fill="#9a9a9a"><rect x="141" y="3" width="1" height="1"/><rect x="139" y="5" width="1" height="1"/><rect x="141" y="5" width="1" height="1"/><rect x="137" y="7" width="1" height="1"/><rect x="139" y="7" width="1" height="1"/><rect x="141" y="7" width="1" height="1"/><rect x="135" y="9" width="1" height="1"/><rect x="137" y="9" width="1" height="1"/><rect x="139" y="9" width="1" height="1"/><rect x="141" y="9" width="1" height="1"/><rect x="135" y="11" width="1" height="1"/><rect x="137" y="11" width="1" height="1"/><rect x="139" y="11" width="1" height="1"/><rect x="141" y="11" width="1" height="1"/><rect x="143" y="11" width="1" height="1"/><rect x="143" y="9" width="1" height="1"/><rect x="143" y="7" width="1" height="1"/><rect x="143" y="5" width="1" height="1"/><rect x="133" y="11" width="1" height="1"/></g>
</svg>
<!-- styles -->
<div class="a" style="left:748px;top:347px;width:206px;height:182px;background:#ececec"></div>
<div class="a" style="left:748px;top:347px;width:192px;height:167px;background:#000"></div>
<div class="a" style="left:748px;top:347px;width:31px;height:31px;background:#d8d8d8;border:1px solid #f2f2f2;"></div>
<div class="a" style="left:756px;top:355px;width:16px;height:16px;background:radial-gradient(ellipse 5px 2.5px at 50% 3px,rgba(255,255,255,0.95),rgba(255,255,255,0) 100%),linear-gradient(135deg,#8a9838,#3a4a10 40%,#98a840 65%,#2a3808);box-shadow:1px 2px 2px rgba(0,0,0,0.45)"></div>
<div class="a" style="left:780px;top:347px;width:31px;height:31px;background:#d8d8d8;border:1px solid #f2f2f2;"></div>
<div class="a" style="left:788px;top:355px;width:16px;height:16px;background:linear-gradient(#1a2040,#383e78 25%,#2a3060 60%,#90b8e0 90%,#c0d8f0);box-shadow:1px 2px 2px rgba(0,0,0,0.45)"></div>
<div class="a" style="left:812px;top:347px;width:31px;height:31px;background:#d8d8d8;border:1px solid #f2f2f2;"></div>
<div class="a" style="left:820px;top:355px;width:16px;height:16px;background:linear-gradient(90deg,#080c18,#182848 35%,#b0c8f0 50%,#182848 65%,#080c18);box-shadow:1px 2px 2px rgba(0,0,0,0.45)"></div>
<div class="a" style="left:844px;top:347px;width:31px;height:31px;background:#d8d8d8;border:1px solid #f2f2f2;"></div>
<div class="a" style="left:852px;top:355px;width:16px;height:16px;background:radial-gradient(#ffffff 35%,#f0d0d0 65%,#a84848 95%);box-shadow:1px 2px 2px rgba(0,0,0,0.45)"></div>
<div class="a" style="left:876px;top:347px;width:31px;height:31px;background:#d8d8d8;border:1px solid #f2f2f2;"></div>
<div class="a" style="left:884px;top:355px;width:16px;height:16px;background:radial-gradient(#ffffff 30%,#ecc8c8 60%,#803030 95%);box-shadow:1px 2px 2px rgba(0,0,0,0.45)"></div>
<div class="a" style="left:908px;top:347px;width:31px;height:31px;background:#d8d8d8;border:1px solid #f2f2f2;"></div>
<div class="a" style="left:916px;top:355px;width:16px;height:16px;background:linear-gradient(135deg,#38d8e0,#1898a8 35%,#b82848 60%,#801828);box-shadow:1px 2px 2px rgba(0,0,0,0.45)"></div>
<div class="a" style="left:748px;top:379px;width:31px;height:31px;background:#d8d8d8;border:1px solid #f2f2f2;"></div>
<div class="a" style="left:756px;top:387px;width:16px;height:16px;background:radial-gradient(ellipse 5px 2.5px at 50% 3px,rgba(255,255,255,0.95),rgba(255,255,255,0) 100%),linear-gradient(#909090,#585858 35%,#383838);box-shadow:1px 2px 2px rgba(0,0,0,0.45)"></div>
<div class="a" style="left:780px;top:379px;width:31px;height:31px;background:#d8d8d8;border:1px solid #f2f2f2;"></div>
<div class="a" style="left:788px;top:387px;width:16px;height:16px;background:radial-gradient(ellipse 5px 2.5px at 50% 3px,rgba(255,255,255,0.95),rgba(255,255,255,0) 100%),linear-gradient(#707880,#3a4048 35%,#282e36);box-shadow:1px 2px 2px rgba(0,0,0,0.45)"></div>
<div class="a" style="left:812px;top:379px;width:31px;height:31px;background:#d8d8d8;border:1px solid #f2f2f2;"></div>
<div class="a" style="left:820px;top:387px;width:16px;height:16px;background:repeating-linear-gradient(60deg,#98a8c8 0 2px,#506080 2px 4px);box-shadow:1px 2px 2px rgba(0,0,0,0.45)"></div>
<div class="a" style="left:844px;top:379px;width:31px;height:31px;background:#d8d8d8;border:1px solid #f2f2f2;"></div>
<div class="a" style="left:852px;top:387px;width:16px;height:16px;background:repeating-linear-gradient(60deg,#7888b0 0 2px,#3a4a70 2px 4px);box-shadow:1px 2px 2px rgba(0,0,0,0.45)"></div>
<div class="a" style="left:876px;top:379px;width:31px;height:31px;background:#d8d8d8;border:1px solid #f2f2f2;"></div>
<div class="a" style="left:884px;top:387px;width:16px;height:16px;background:radial-gradient(ellipse 5px 2.5px at 50% 3px,rgba(255,255,255,0.95),rgba(255,255,255,0) 100%),radial-gradient(#9030b0,#501068 70%);box-shadow:1px 2px 2px rgba(0,0,0,0.45)"></div>
<div class="a" style="left:908px;top:379px;width:31px;height:31px;background:#d8d8d8;border:1px solid #f2f2f2;"></div>
<div class="a" style="left:916px;top:387px;width:16px;height:16px;background:radial-gradient(ellipse 5px 2.5px at 50% 3px,rgba(255,255,255,0.95),rgba(255,255,255,0) 100%),radial-gradient(#282828,#050505 70%);box-shadow:1px 2px 2px rgba(0,0,0,0.45)"></div>
<div class="a" style="left:748px;top:411px;width:31px;height:31px;background:#d8d8d8;border:1px solid #f2f2f2;"></div>
<div class="a" style="left:756px;top:419px;width:16px;height:16px;background:radial-gradient(ellipse 5px 2.5px at 50% 3px,rgba(255,255,255,0.95),rgba(255,255,255,0) 100%),radial-gradient(#585858,#202020 75%);box-shadow:1px 2px 2px rgba(0,0,0,0.45)"></div>
<div class="a" style="left:780px;top:411px;width:31px;height:31px;background:#d8d8d8;border:1px solid #f2f2f2;"></div>
<div class="a" style="left:788px;top:419px;width:16px;height:16px;background:radial-gradient(ellipse 5px 2.5px at 50% 3px,rgba(255,255,255,0.95),rgba(255,255,255,0) 100%),radial-gradient(#7a4828,#3a1a0a 75%);box-shadow:1px 2px 2px rgba(0,0,0,0.45)"></div>
<div class="a" style="left:812px;top:411px;width:31px;height:31px;background:#d8d8d8;border:1px solid #f2f2f2;"></div>
<div class="a" style="left:820px;top:419px;width:16px;height:16px;background:linear-gradient(135deg,#d8c890,#3a2a10 30%,#c0a868 50%,#281a08 75%,#a08850);box-shadow:1px 2px 2px rgba(0,0,0,0.45)"></div>
<div class="a" style="left:844px;top:411px;width:31px;height:31px;background:#d8d8d8;border:1px solid #f2f2f2;"></div>
<div class="a" style="left:852px;top:419px;width:16px;height:16px;background:linear-gradient(160deg,#c8c060,#908830 40%,#d8d088 55%,#686020);box-shadow:1px 2px 2px rgba(0,0,0,0.45)"></div>
<div class="a" style="left:876px;top:411px;width:31px;height:31px;background:#d8d8d8;border:1px solid #f2f2f2;"></div>
<div class="a" style="left:884px;top:419px;width:16px;height:16px;background:linear-gradient(160deg,#685828,#b8a058 40%,#786030 60%,#403018);box-shadow:1px 2px 2px rgba(0,0,0,0.45)"></div>
<div class="a" style="left:908px;top:411px;width:31px;height:31px;background:#d8d8d8;border:1px solid #f2f2f2;"></div>
<div class="a" style="left:916px;top:419px;width:16px;height:16px;background:linear-gradient(160deg,#d8c048,#a08828 45%,#e0d068 60%,#786010);box-shadow:1px 2px 2px rgba(0,0,0,0.45)"></div>
<div class="a" style="left:748px;top:443px;width:31px;height:31px;background:#d8d8d8;border:1px solid #f2f2f2;"></div>
<div class="a" style="left:756px;top:451px;width:16px;height:16px;background:linear-gradient(160deg,#d8c878,#807028 40%,#e0d088 60%,#585010);box-shadow:1px 2px 2px rgba(0,0,0,0.45)"></div>
<div class="a" style="left:780px;top:443px;width:31px;height:31px;background:#d8d8d8;border:1px solid #f2f2f2;"></div>
<div class="a" style="left:788px;top:451px;width:16px;height:16px;background:radial-gradient(ellipse 5px 2.5px at 50% 3px,rgba(255,255,255,0.95),rgba(255,255,255,0) 100%),linear-gradient(90deg,#8a6050,#5a3828 50%,#906a58);box-shadow:1px 2px 2px rgba(0,0,0,0.45)"></div>
<div class="a" style="left:812px;top:443px;width:31px;height:31px;background:#d8d8d8;border:1px solid #f2f2f2;"></div>
<div class="a" style="left:820px;top:451px;width:16px;height:16px;background:radial-gradient(ellipse 5px 2.5px at 50% 3px,rgba(255,255,255,0.95),rgba(255,255,255,0) 100%),repeating-linear-gradient(45deg,#c87848 0 3px,#984c28 3px 5px);box-shadow:1px 2px 2px rgba(0,0,0,0.45)"></div>
<div class="a" style="left:844px;top:443px;width:31px;height:31px;background:#d8d8d8;border:1px solid #f2f2f2;"></div>
<div class="a" style="left:852px;top:451px;width:16px;height:16px;background:radial-gradient(ellipse 5px 2.5px at 50% 3px,rgba(255,255,255,0.95),rgba(255,255,255,0) 100%),repeating-linear-gradient(90deg,#6a5444 0 3px,#4a3828 3px 4px);box-shadow:1px 2px 2px rgba(0,0,0,0.45)"></div>
<div class="a" style="left:876px;top:443px;width:31px;height:31px;background:#d8d8d8;border:1px solid #f2f2f2;"></div>
<div class="a" style="left:884px;top:451px;width:16px;height:16px;background:radial-gradient(ellipse 5px 2.5px at 50% 3px,rgba(255,255,255,0.95),rgba(255,255,255,0) 100%),linear-gradient(45deg,#a05018 48%,#201008 50%,#904818 52%);box-shadow:1px 2px 2px rgba(0,0,0,0.45)"></div>
<div class="a" style="left:908px;top:443px;width:31px;height:31px;background:#d8d8d8;border:1px solid #f2f2f2;"></div>
<div class="a" style="left:916px;top:451px;width:16px;height:16px;background:radial-gradient(ellipse 5px 2.5px at 50% 3px,rgba(255,255,255,0.95),rgba(255,255,255,0) 100%),repeating-linear-gradient(90deg,#8a7868 0 3px,#6a5848 3px 4px);box-shadow:1px 2px 2px rgba(0,0,0,0.45)"></div>
<div class="a" style="left:748px;top:475px;width:31px;height:31px;background:#d8d8d8;border:1px solid #f2f2f2;"></div>
<div class="a" style="left:756px;top:483px;width:16px;height:16px;background:radial-gradient(#60b070,#186830 75%);box-shadow:1px 2px 2px rgba(0,0,0,0.45)"></div>
<div class="a" style="left:780px;top:475px;width:31px;height:31px;background:#d8d8d8;border:1px solid #f2f2f2;"></div>
<div class="a" style="left:788px;top:483px;width:16px;height:16px;background:linear-gradient(135deg,#b0c088,#708848 50%,#485a28);box-shadow:1px 2px 2px rgba(0,0,0,0.45)"></div>
<div class="a" style="left:812px;top:475px;width:31px;height:31px;background:#d8d8d8;border:1px solid #f2f2f2;"></div>
<div class="a" style="left:820px;top:483px;width:16px;height:16px;background:radial-gradient(#70a068,#386830 75%);box-shadow:1px 2px 2px rgba(0,0,0,0.45)"></div>
<div class="a" style="left:844px;top:475px;width:31px;height:31px;background:#d8d8d8;border:1px solid #f2f2f2;"></div>
<div class="a" style="left:852px;top:483px;width:16px;height:16px;background:linear-gradient(160deg,#605850,#282018 40%,#b0a8a0 55%,#302820);box-shadow:1px 2px 2px rgba(0,0,0,0.45)"></div>
<div class="a" style="left:876px;top:475px;width:31px;height:31px;background:#d8d8d8;border:1px solid #f2f2f2;"></div>
<div class="a" style="left:884px;top:483px;width:16px;height:16px;background:linear-gradient(160deg,#b08878,#704838 45%,#c8a090 60%,#503020);box-shadow:1px 2px 2px rgba(0,0,0,0.45)"></div>
<div class="a" style="left:908px;top:475px;width:31px;height:31px;background:#d8d8d8;border:1px solid #f2f2f2;"></div>
<div class="a" style="left:916px;top:483px;width:16px;height:16px;background:linear-gradient(160deg,#506858,#202a24 45%,#90a898 60%,#18201a);box-shadow:1px 2px 2px rgba(0,0,0,0.45)"></div>
<div class="a" style="left:748px;top:507px;width:31px;height:7px;background:#d8d8d8;border:1px solid #f2f2f2;border-bottom:none;"></div>
<div class="a" style="left:780px;top:507px;width:31px;height:7px;background:#d8d8d8;border:1px solid #f2f2f2;border-bottom:none;"></div>
<div class="a" style="left:812px;top:507px;width:31px;height:7px;background:#d8d8d8;border:1px solid #f2f2f2;border-bottom:none;"></div>
<div class="a" style="left:844px;top:507px;width:31px;height:7px;background:#d8d8d8;border:1px solid #f2f2f2;border-bottom:none;"></div>
<div class="a" style="left:876px;top:507px;width:31px;height:7px;background:#d8d8d8;border:1px solid #f2f2f2;border-bottom:none;"></div>
<div class="a" style="left:908px;top:507px;width:31px;height:7px;background:#d8d8d8;border:1px solid #f2f2f2;border-bottom:none;"></div>
<div class="a" style="left:940px;top:347px;width:14px;height:167px;background:#f4f4fa"></div>
<div class="a" style="left:941px;top:348px;width:13px;height:15px;border:1px solid #c4c8d8;border-radius:2px;background:linear-gradient(#fdfdff,#d0d2e0)"></div>
<svg class="a" style="left:941px;top:348px" width="13" height="15"><path d="M3 9 L6.5 5.5 L10 9" fill="none" stroke="#333344" stroke-width="2"/></svg>
<div class="a" style="left:941px;top:364px;width:13px;height:46px;border:1px solid #c4c8d8;border-radius:2px;background:linear-gradient(90deg,#f0f0f8,#e0e0ec 40%,#c8cada)"></div>
<svg class="a" style="left:941px;top:364px" width="13" height="46"><path d="M4 20.5h5M4 22.5h5M4 24.5h5M4 26.5h5" stroke="#8a8aa0"/></svg>
<div class="a" style="left:941px;top:497px;width:13px;height:17px;border:1px solid #c4c8d8;border-radius:2px;background:linear-gradient(#fdfdff,#d0d2e0)"></div>
<svg class="a" style="left:941px;top:497px" width="13" height="17"><path d="M3 6.5 L6.5 10 L10 6.5" fill="none" stroke="#333344" stroke-width="2"/></svg>
<div class="a" style="left:748px;top:514px;width:206px;height:15px;background:#ececec;border-top:1px solid #f6f6f6"></div>
<svg class="a" style="left:850px;top:514px" width="104" height="15">
<circle cx="17.5" cy="7.5" r="4" fill="none" stroke="#8a8a8a" stroke-width="1.1"/><path d="M14.8 4.8 L20.2 10.2" stroke="#8a8a8a" stroke-width="1.1"/>
<rect x="43.5" y="3.5" width="9" height="8" fill="#fff" stroke="#777"/><rect x="47" y="7" width="3" height="3" fill="#888"/>
<path d="M73 5 H81 L80 12 H74 Z" fill="#eee" stroke="#666"/><path d="M72.5 4.5 H81.5" stroke="#555" stroke-width="1.2"/><path d="M75 3.5 H79" stroke="#555"/>
<g fill="#9a9a9a"><rect x="102" y="5" width="1" height="1"/><rect x="100" y="7" width="1" height="1"/><rect x="102" y="7" width="1" height="1"/><rect x="98" y="9" width="1" height="1"/><rect x="100" y="9" width="1" height="1"/><rect x="102" y="9" width="1" height="1"/><rect x="96" y="11" width="1" height="1"/><rect x="98" y="11" width="1" height="1"/><rect x="100" y="11" width="1" height="1"/><rect x="102" y="11" width="1" height="1"/></g>
</svg>
<!-- layers -->
<div class="a" style="left:748px;top:563px;width:206px;height:184px;background:#ececec;border-top:1px solid #f6f6f6"></div>
<div class="combo" style="left:750px;top:565px;width:106px;height:19px"><div class="ctxt" style="left:3px;top:5px">Normal</div><div class="cbtn" style="height:17px;width:17px"><svg class="chev" width="10" height="7"><path d="M1 1 L5 5 L9 1" fill="none" stroke="#1e1e1e" stroke-width="2.2"/></svg></div></div>
<div class="t" style="left:858px;top:569px;font-size:10.5px">Opacity:</div>
<div class="combo" style="left:900px;top:565px;width:52px;height:19px"><div class="ctxt" style="left:5px;top:4px">100%</div><div class="cbtn" style="height:17px;width:15px"><svg class="a" style="left:4px;top:4px" width="6" height="8"><path d="M1 0.5 L5 4 L1 7.5Z" fill="#1e1e1e"/></svg></div></div>
<div class="a" style="left:748px;top:586px;width:206px;height:1px;background:#c4c4c4"></div>
<div class="a" style="left:748px;top:587px;width:206px;height:1px;background:#f8f8f8"></div>
<div class="t" style="left:753px;top:596px;font-size:10px">Lock:</div>
<svg class="a" style="left:780px;top:588px" width="70" height="22">
<rect x="5.5" y="5.5" width="11" height="11" fill="#f4f4f4" stroke="#9a9a9a"/><rect x="6" y="6" width="5" height="5" fill="#d8d8d8"/><rect x="11" y="11" width="5" height="5" fill="#d8d8d8"/>
<path d="M24 18 C 25 15, 28 12, 30 12 C 31 13, 30 15, 28 16 Z" fill="#bcbcbc" stroke="#999" stroke-width="0.8"/><path d="M30 12.5 L35 6" stroke="#aaa" stroke-width="1.6"/>
<path d="M45.5 5 V17 M39.5 11 H51.5" stroke="#111" stroke-width="1.3"/><path d="M45.5 3.5 L43 6.5 H48Z M45.5 18.5 L43 15.5 H48Z M38 11 L41 8.5 V13.5Z M53 11 L50 8.5 V13.5Z" fill="#111"/>
<path d="M60 10 V8.5 C 60 5.5, 66 5.5, 66 8.5 V10" fill="none" stroke="#222" stroke-width="1.5"/><rect x="58.5" y="10" width="9" height="7" rx="1" fill="#222"/><rect x="59.5" y="12" width="7" height="1" fill="#666"/>
</svg>
<div class="t" style="left:881px;top:596px;font-size:10px">Fill:</div>
<div class="combo" style="left:900px;top:591px;width:52px;height:19px"><div class="ctxt" style="left:5px;top:4px">100%</div><div class="cbtn" style="height:17px;width:15px"><svg class="a" style="left:4px;top:4px" width="6" height="8"><path d="M1 0.5 L5 4 L1 7.5Z" fill="#1e1e1e"/></svg></div></div>
<div class="a" style="left:748px;top:612px;width:206px;height:1px;background:#a8a8a8"></div>
<div class="a" style="left:748px;top:613px;width:192px;height:119px;background:#ececec"></div>
<div class="a" style="left:771px;top:613px;width:169px;height:38px;background:#b2b4c4"></div>
<div class="a" style="left:770px;top:613px;width:1px;height:78px;background:#c4c4c4"></div>
<div class="a" style="left:748px;top:651px;width:192px;height:1px;background:#a8a8a8"></div>
<div class="a" style="left:748px;top:690px;width:192px;height:1px;background:#a8a8a8"></div>
<div class="a" style="left:751px;top:624px;width:16px;height:16px;background:#e6e6e6;border-top:1px solid #9a9a9a;border-left:1px solid #9a9a9a;border-right:1px solid #fafafa;border-bottom:1px solid #fafafa"></div>
<svg class="a" style="left:751px;top:624px" width="16" height="16"><path d="M2.5 6.5 C 5 3.8, 10.5 3.8, 13.5 6.8" fill="none" stroke="#222" stroke-width="1"/><path d="M3 5 C 6 2.6, 10.5 2.6, 13 5" fill="none" stroke="#777" stroke-width="0.8"/><circle cx="7.6" cy="7.6" r="2.7" fill="#000"/><circle cx="6.9" cy="7.3" r="0.8" fill="#fff"/><path d="M3.5 9.8 C 6 12.2, 10 12.2, 12.8 9.3" fill="none" stroke="#222" stroke-width="1.2"/></svg>
<div class="a" style="left:751px;top:663px;width:16px;height:16px;background:#e6e6e6;border-top:1px solid #9a9a9a;border-left:1px solid #9a9a9a;border-right:1px solid #fafafa;border-bottom:1px solid #fafafa"></div>
<svg class="a" style="left:751px;top:663px" width="16" height="16"><path d="M2.5 6.5 C 5 3.8, 10.5 3.8, 13.5 6.8" fill="none" stroke="#222" stroke-width="1"/><path d="M3 5 C 6 2.6, 10.5 2.6, 13 5" fill="none" stroke="#777" stroke-width="0.8"/><circle cx="7.6" cy="7.6" r="2.7" fill="#000"/><circle cx="6.9" cy="7.3" r="0.8" fill="#fff"/><path d="M3.5 9.8 C 6 12.2, 10 12.2, 12.8 9.3" fill="none" stroke="#222" stroke-width="1.2"/></svg>
<svg class="a" style="left:771px;top:613px" width="39" height="39" shape-rendering="crispEdges">
<rect x="2" y="2" width="34" height="34" fill="#fff"/>
<rect x="3.5" y="3.5" width="31" height="31" fill="#fff" stroke="#000" stroke-width="1"/>
<path d="M1.5 13 V1.5 H13 M25 1.5 H36.5 V13 M36.5 25 V36.5 H25 M13 36.5 H1.5 V25" fill="none" stroke="#000" stroke-width="1"/>
</svg>
<div class="t" style="left:784px;top:622px;font-family:'Liberation Serif',serif;font-size:20px;text-shadow:0.5px 0.5px 1px #999">T</div>
<div class="t" style="left:814px;top:629px;font-size:10px;font-weight:bold;letter-spacing:0.6px">Rawr</div>
<div class="a" style="left:774px;top:655px;width:32px;height:32px;background:#fff;border:1px solid #000"></div>
<div class="t" style="left:814px;top:667px;font-size:11px;font-style:italic">Background</div>
<svg class="a" style="left:912px;top:664px" width="14" height="14"><path d="M4.5 6 V4.5 C 4.5 1.5, 9.5 1.5, 9.5 4.5 V6" fill="none" stroke="#333" stroke-width="1.2"/><rect x="3.5" y="6" width="7" height="6" fill="#e8e8e8" stroke="#333"/><rect x="6.5" y="8" width="1" height="2" fill="#333"/></svg>
<div class="a" style="left:940px;top:613px;width:14px;height:119px;background:#f8f8fc"></div>
<div class="sbtn" style="left:941px;top:614px;width:13px;height:17px"></div>
<svg class="a" style="left:941px;top:614px" width="13" height="17"><path d="M3 10 L6.5 6.5 L10 10" fill="none" stroke="#c6c6bc" stroke-width="2"/></svg>
<div class="sbtn" style="left:941px;top:714px;width:13px;height:17px"></div>
<svg class="a" style="left:941px;top:714px" width="13" height="17"><path d="M3 7 L6.5 10.5 L10 7" fill="none" stroke="#c6c6bc" stroke-width="2"/></svg>
<div class="a" style="left:748px;top:732px;width:192px;height:1px;background:#a8a8a8"></div>
<div class="a" style="left:748px;top:733px;width:206px;height:14px;background:#ececec"></div>
<svg class="a" style="left:748px;top:732px" width="206" height="15">
<rect x="6.5" y="4.5" width="9" height="6" rx="3" fill="none" stroke="#8a8a8a" stroke-width="1.3"/><rect x="14.5" y="4.5" width="9" height="6" rx="3" fill="none" stroke="#8a8a8a" stroke-width="1.3"/><path d="M10 7.5 H20" stroke="#8a8a8a" stroke-width="1.2"/>
<text x="36" y="12" font-family="Liberation Serif" font-style="italic" font-weight="bold" font-size="13" fill="#333">fx</text><path d="M52 11 H55 L53.5 13Z" fill="#111"/>
<rect x="63.5" y="2.5" width="13" height="11" fill="#a8a8a8" stroke="#333"/><circle cx="70" cy="8" r="3.6" fill="#fff" stroke="#444" stroke-width="0.8"/>
<circle cx="97" cy="8" r="5.5" fill="#fff" stroke="#333" stroke-width="1"/><path d="M93 12 A 5.5 5.5 0 0 1 101 4 Z" fill="#222"/><path d="M104 11 H107 L105.5 13Z" fill="#111"/>
<path d="M118.5 4.5 H122.5 L123.5 5.5 H130.5 V11.5 H118.5 Z" fill="#f4f4f4" stroke="#555"/>
<rect x="145.5" y="3.5" width="9" height="9" fill="#fff" stroke="#555"/><rect x="148.5" y="6.5" width="4" height="4" fill="#888"/>
<path d="M175 5 H183 L182 13 H176 Z" fill="#eee" stroke="#444"/><path d="M174 4.5 H184" stroke="#333" stroke-width="1.4"/><path d="M177 3 H181" stroke="#333"/><path d="M178 6 V12 M180 6 V12" stroke="#777"/>
<g fill="#9a9a9a"><rect x="204" y="5" width="1" height="1"/><rect x="202" y="7" width="1" height="1"/><rect x="204" y="7" width="1" height="1"/><rect x="200" y="9" width="1" height="1"/><rect x="202" y="9" width="1" height="1"/><rect x="204" y="9" width="1" height="1"/><rect x="198" y="11" width="1" height="1"/><rect x="200" y="11" width="1" height="1"/><rect x="202" y="11" width="1" height="1"/><rect x="204" y="11" width="1" height="1"/><rect x="196" y="13" width="1" height="1"/><rect x="198" y="13" width="1" height="1"/><rect x="200" y="13" width="1" height="1"/><rect x="202" y="13" width="1" height="1"/><rect x="204" y="13" width="1" height="1"/></g>
</svg>

</body></html>
